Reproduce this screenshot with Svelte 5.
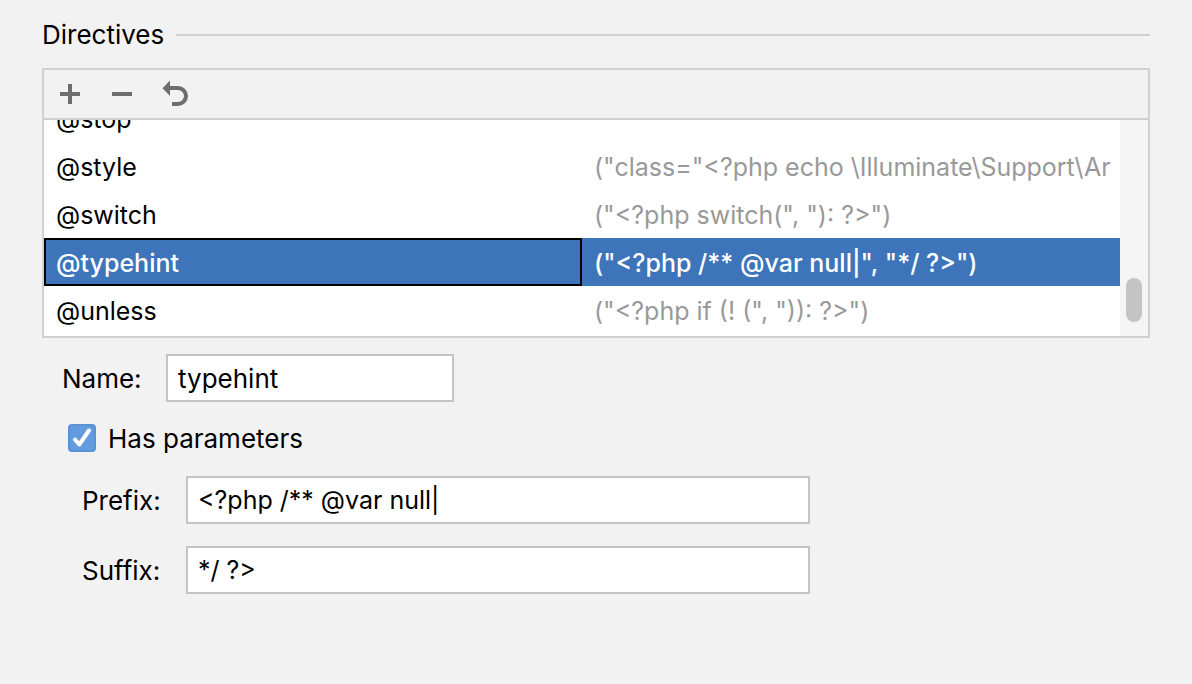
<script>
  let rows = [
    { name: '@stop', value: '' },
    { name: '@style', value: '("class="<?php echo \\Illuminate\\Support\\Ar' },
    { name: '@switch', value: '("<?php switch(", "): ?>")' },
    { name: '@typehint', value: '("<?php /** @var null|", "*/ ?>")' },
    { name: '@unless', value: '("<?php if (! (", ")): ?>")' }
  ];
  let selected = $state(3);
  let name = $state('typehint');
  let hasParameters = $state(true);
  let prefix = $state('<?php /** @var null|');
  let suffix = $state('*/ ?>');
</script>

<main>
  <header>
    <h1>Directives</h1>
    <span class="rule"></span>
  </header>

  <section class="panel">
    <div class="toolbar">
      <button aria-label="Add">
        <svg viewBox="0 0 28 28"><path d="M14 4v20M4 14h20" /></svg>
      </button>
      <button aria-label="Remove">
        <svg viewBox="0 0 28 28"><path d="M4 14h20" /></svg>
      </button>
      <button aria-label="Revert">
        <svg viewBox="0 0 28 28"><path d="M9 8h9a8 8 0 0 1 0 16H12" /><path class="fill" d="M2.500 8.300L10 0.500v15.500z" /></svg>
      </button>
    </div>
    <div class="list">
      <table>
        <tbody>
          {#each rows as row, i}
            <tr class:selected={i === selected} onclick={() => (selected = i)}>
              <td class="key">{row.name}</td>
              <td class="value">{row.value}</td>
            </tr>
          {/each}
        </tbody>
      </table>
      <div class="track"><span class="thumb"></span></div>
    </div>
  </section>

  <form>
    <div class="field name">
      <label for="name">Name:</label>
      <input id="name" type="text" bind:value={name} />
    </div>
    <label class="check">
      <input type="checkbox" bind:checked={hasParameters} />
      <span class="box">
        {#if hasParameters}
          <svg viewBox="0 0 28 28"><path d="M7 15.500l4.300 5L21 6.500" /></svg>
        {/if}
      </span>
      Has parameters
    </label>
    <div class="field param">
      <label for="prefix">Prefix:</label>
      <input id="prefix" type="text" bind:value={prefix} />
    </div>
    <div class="field param">
      <label for="suffix">Suffix:</label>
      <input id="suffix" type="text" bind:value={suffix} />
    </div>
  </form>
</main>

<style>
  :global(body) { margin: 0; background: #f2f2f2; }
  main { padding: 20px 42px; font: 26px/30px Inter, sans-serif; color: #000; }
  header { display: flex; align-items: center; gap: 12px; }
  h1 { margin: 0; font-size: inherit; font-weight: 400; }
  .rule { flex: 1; height: 2px; background: #d1d1d1; }
  .panel { margin-top: 18px; border: 2px solid #d1d1d1; }
  .toolbar { display: flex; gap: 24px; padding: 10px 12px; border-bottom: 2px solid #d1d1d1; }
  button { width: 28px; height: 28px; padding: 0; border: 0; background: none; }
  svg { display: block; width: 28px; height: 28px; fill: none; stroke: #6e6e6e; stroke-width: 4; }
  .fill { fill: #6e6e6e; stroke: none; }
  .list { display: flex; align-items: flex-end; height: 216px; overflow: hidden; background: #fff; }
  table { flex: 1; width: 100%; min-width: 0; margin-bottom: 2px; table-layout: fixed; border-collapse: collapse; font-size: 25px; }
  td { height: 48px; box-sizing: border-box; padding: 2px 0 0 12px; white-space: nowrap; overflow: hidden; }
  .key { width: 50%; }
  .value { color: #999; }
  .selected td { background: #3d74ba; color: #fff; font-weight: 500; }
  .selected .key { outline: 2px solid #000; outline-offset: -2px; }
  .track { flex: none; align-self: stretch; width: 28px; background: #f5f5f5; position: relative; }
  .thumb { position: absolute; right: 6px; bottom: 14px; width: 16px; height: 44px; border-radius: 8px; background: #c4c4c4; }
  form { padding: 16px 20px; }
  .field { display: flex; align-items: center; }
  .field label { width: 104px; padding-top: 2px; }
  .field input { box-sizing: border-box; max-width: 100%; height: 48px; padding: 0 10px; border: 2px solid #c4c4c4; border-radius: 0; background: #fff; font: inherit; color: #000; outline: 0; }
  .name input { width: 288px; }
  .param { padding-left: 20px; margin-bottom: 22px; }
  .param input { width: 624px; font-size: 25px; }
  .check { position: relative; display: flex; align-items: flex-start; gap: 12px; margin: 22px 6px; }
  .check input { position: absolute; opacity: 0; }
  .box { box-sizing: border-box; width: 28px; height: 28px; border: 2px solid #5a92d6; border-radius: 4px; background: #629cdf; }
  .box svg { margin: -2px; stroke: #fff; stroke-linecap: round; stroke-linejoin: round; }
</style>
